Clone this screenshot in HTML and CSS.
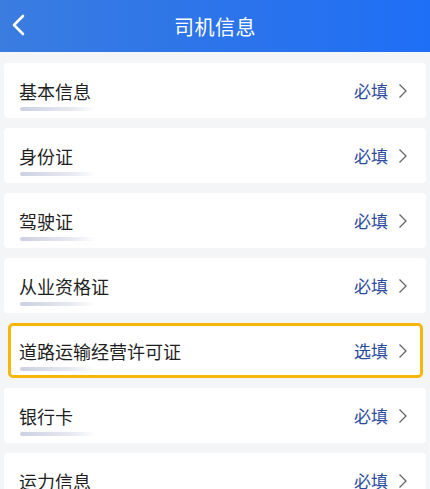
FILE: index.html
```html
<!DOCTYPE html>
<html lang="zh-CN">
<head>
  <meta charset="UTF-8">
  <meta name="viewport" content="width=device-width, initial-scale=1.0">
  <title>司机信息</title>
  <link rel="stylesheet" href="styles.css">
</head>
<body>
  <header class="topbar">
    <span class="back">
      <svg width="14" height="22" viewBox="0 0 14 22"><path d="M12 2 L3 11 L12 20" fill="none" stroke="#fff" stroke-width="2.6" stroke-linecap="round" stroke-linejoin="round"/></svg>
    </span>
    <h1 class="title">司机信息</h1>
  </header>

  <ul class="list">
    <li class="card">
      <span class="label">基本信息</span>
      <span class="status">必填</span>
      <svg class="arrow" width="10" height="16" viewBox="0 0 10 16"><path d="M1.5 1.5 L8 8 L1.5 14.5" fill="none" stroke="#666" stroke-width="1.3"/></svg>
    </li>
    <li class="card">
      <span class="label">身份证</span>
      <span class="status">必填</span>
      <svg class="arrow" width="10" height="16" viewBox="0 0 10 16"><path d="M1.5 1.5 L8 8 L1.5 14.5" fill="none" stroke="#666" stroke-width="1.3"/></svg>
    </li>
    <li class="card">
      <span class="label">驾驶证</span>
      <span class="status">必填</span>
      <svg class="arrow" width="10" height="16" viewBox="0 0 10 16"><path d="M1.5 1.5 L8 8 L1.5 14.5" fill="none" stroke="#666" stroke-width="1.3"/></svg>
    </li>
    <li class="card">
      <span class="label">从业资格证</span>
      <span class="status">必填</span>
      <svg class="arrow" width="10" height="16" viewBox="0 0 10 16"><path d="M1.5 1.5 L8 8 L1.5 14.5" fill="none" stroke="#666" stroke-width="1.3"/></svg>
    </li>
    <li class="card card-highlight">
      <span class="label">道路运输经营许可证</span>
      <span class="status">选填</span>
      <svg class="arrow" width="10" height="16" viewBox="0 0 10 16"><path d="M1.5 1.5 L8 8 L1.5 14.5" fill="none" stroke="#666" stroke-width="1.3"/></svg>
    </li>
    <li class="card">
      <span class="label">银行卡</span>
      <span class="status">必填</span>
      <svg class="arrow" width="10" height="16" viewBox="0 0 10 16"><path d="M1.5 1.5 L8 8 L1.5 14.5" fill="none" stroke="#666" stroke-width="1.3"/></svg>
    </li>
    <li class="card">
      <span class="label">运力信息</span>
      <span class="status">必填</span>
      <svg class="arrow" width="10" height="16" viewBox="0 0 10 16"><path d="M1.5 1.5 L8 8 L1.5 14.5" fill="none" stroke="#666" stroke-width="1.3"/></svg>
    </li>
  </ul>
</body>
</html>
```

FILE: styles.css
```css
body {
  margin: 0;
  padding: 0;
  background: #f4f5f7;
  font-family: "Noto Sans CJK SC", "Noto Sans", sans-serif;
  overflow: hidden;
}

.topbar {
  height: 52px;
  display: flex;
  align-items: center;
  justify-content: center;
  position: relative;
  background: linear-gradient(90deg, #3a7ce0 0%, #2c74ea 50%, #1f6ff6 100%);
}

.back {
  position: absolute;
  left: 11px;
  top: 14px;
  display: flex;
}

.title {
  margin: 0;
  color: #fff;
  font-size: 20px;
  font-weight: 400;
  letter-spacing: 0.5px;
}

.list {
  list-style: none;
  margin: 0;
  padding: 11px 4px 0;
  display: flex;
  flex-direction: column;
  gap: 10px;
}

.card {
  height: 55px;
  background: #fff;
  border-radius: 4px;
  display: flex;
  align-items: center;
  padding: 0 18px 0 15px;
}

.card-highlight {
  margin: 0 3px 0 4px;
  height: 49px;
  padding: 0 12px 0 8px;
  border: 3px solid #f7b60a;
  border-radius: 5px;
}

.label {
  flex: 1;
  font-size: 18px;
  color: #1f1f1f;
  position: relative;
}

.label::after {
  content: "";
  position: absolute;
  left: 1px;
  bottom: -7px;
  width: 76px;
  height: 4px;
  border-radius: 2px;
  background: linear-gradient(90deg, #ccd0e2, #e9ebf2 70%, rgba(255,255,255,0));
}

.status {
  font-size: 17px;
  color: #2a4a9e;
  margin-right: 10px;
}

.arrow {
  display: block;
}
```
